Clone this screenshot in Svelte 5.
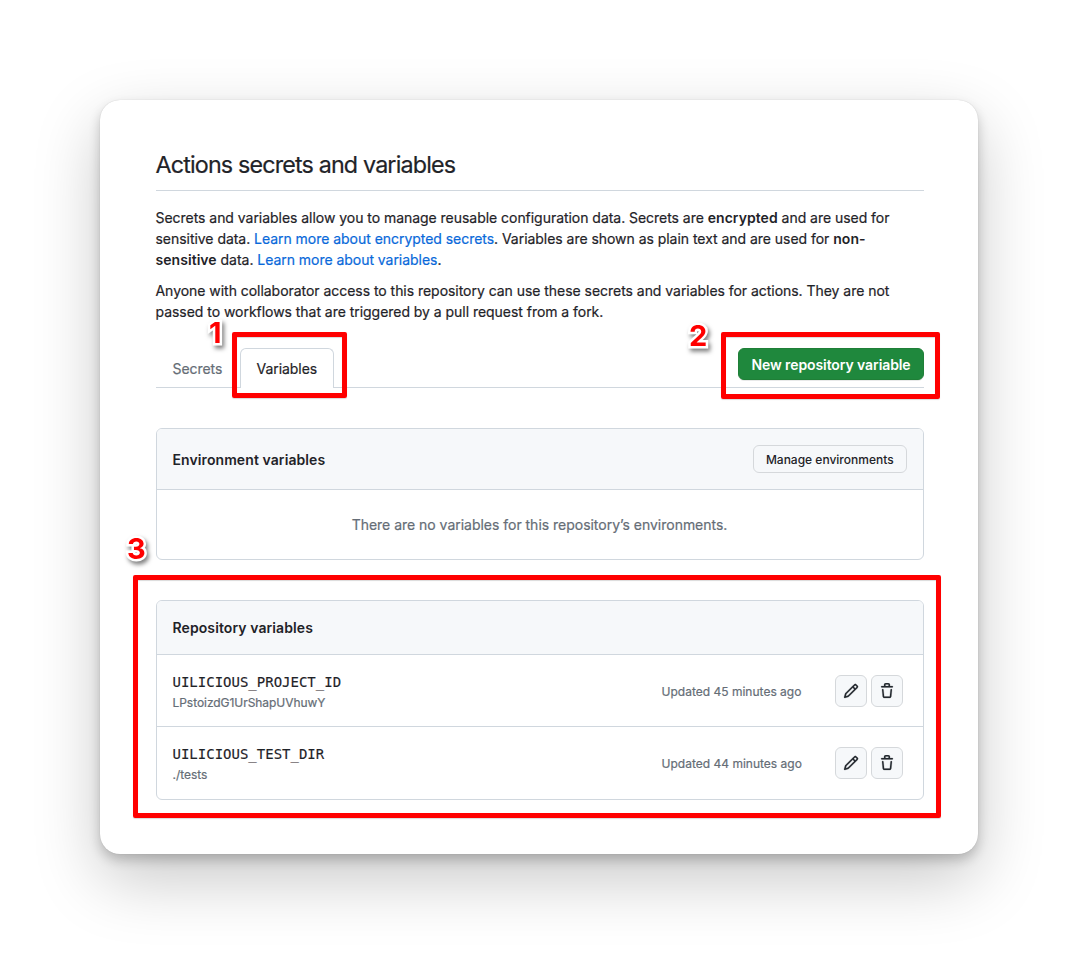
<script>
  const variables = [
    { name: 'UILICIOUS_PROJECT_ID', value: 'LPstoizdG1UrShapUVhuwY', updated: 'Updated 45 minutes ago' },
    { name: 'UILICIOUS_TEST_DIR', value: './tests', updated: 'Updated 44 minutes ago' }
  ];
</script>

<main class="stage">
  <section class="card">
    <h2>Actions secrets and variables</h2>

    <p class="intro">
      <span>Secrets and variables allow you to manage reusable configuration data. Secrets are <strong>encrypted</strong> and are used for</span><br />
      <span>sensitive data. <a href="#secrets">Learn more about encrypted secrets</a>. Variables are shown as plain text and are used for <strong>non-</strong></span><br />
      <span><strong>sensitive</strong> data. <a href="#variables">Learn more about variables</a>.</span>
    </p>
    <p class="intro second">
      <span>Anyone with collaborator access to this repository can use these secrets and variables for actions. They are not</span><br />
      <span>passed to workflows that are triggered by a pull request from a fork.</span>
    </p>

    <div class="tabbar">
      <nav>
        <button class="tab"><span>Secrets</span></button>
        <button class="tab active"><span>Variables</span></button>
      </nav>
      <button class="primary"><span>New repository variable</span></button>
    </div>

    <div class="box env">
      <header>
        <h3>Environment variables</h3>
        <button class="manage"><span>Manage environments</span></button>
      </header>
      <div class="blank"><span>There are no variables for this repository’s environments.</span></div>
    </div>

    <div class="box repo">
      <header><h3>Repository variables</h3></header>
      {#each variables as v}
        <div class="row">
          <div class="info">
            <code>{v.name}</code>
            <small>{v.value}</small>
          </div>
          <span class="updated">{v.updated}</span>
          <button class="icon" aria-label="Edit">
            <svg viewBox="0 0 16 16" width="16" height="16"><path d="M11.013 1.427a1.75 1.75 0 0 1 2.474 0l1.086 1.086a1.75 1.75 0 0 1 0 2.474l-8.61 8.61c-.21.21-.47.364-.756.445l-3.251.93a.75.75 0 0 1-.927-.928l.929-3.25c.081-.286.235-.547.445-.758l8.61-8.61Zm.176 4.823L9.75 4.81l-6.286 6.287a.253.253 0 0 0-.064.108l-.558 1.953 1.953-.558a.253.253 0 0 0 .108-.064Zm1.238-3.763a.25.25 0 0 0-.354 0L10.811 3.75l1.439 1.44 1.263-1.263a.25.25 0 0 0 0-.354Z" /></svg>
          </button>
          <button class="icon" aria-label="Delete">
            <svg viewBox="0 0 16 16" width="16" height="16"><path d="M11 1.75V3h2.25a.75.75 0 0 1 0 1.5H2.75a.75.75 0 0 1 0-1.5H5V1.75C5 .784 5.784 0 6.75 0h2.5C10.216 0 11 .784 11 1.75ZM4.496 6.675l.66 6.6a.25.25 0 0 0 .249.225h5.19a.25.25 0 0 0 .249-.225l.66-6.6a.75.75 0 0 1 1.492.149l-.66 6.6A1.748 1.748 0 0 1 10.595 15h-5.19a1.75 1.75 0 0 1-1.741-1.575l-.66-6.6a.75.75 0 1 1 1.492-.15ZM6.5 1.75V3h3V1.75a.25.25 0 0 0-.25-.25h-2.5a.25.25 0 0 0-.25.25Z" /></svg>
          </button>
        </div>
      {/each}
    </div>
  </section>

  <div class="mark m1"></div>
  <div class="mark m2"></div>
  <div class="mark m3"></div>
  <b class="num n1">1</b>
  <b class="num n2">2</b>
  <b class="num n3">3</b>
</main>

<style>
  :global(body) { margin: 0; background: #fff; }
  * { box-sizing: border-box; }
  .stage {
    position: relative;
    width: 1078px;
    height: 954px;
    padding: 100px;
    overflow: hidden;
    background: #fff;
    color: #1f2328;
    font: 400 14px/21px Inter, "Liberation Sans", sans-serif;
    white-space: nowrap;
  }
  .card {
    height: 754px;
    padding: 47px 54px 0 56px;
    border-radius: 20px;
    background: #fff;
    box-shadow: 0 0 1px rgba(0, 0, 0, 0.2), 0 6px 12px rgba(0, 0, 0, 0.2), 0 25px 66px rgba(0, 0, 0, 0.22);
  }
  h2 {
    height: 44px;
    margin: 0 0 16px;
    border-bottom: 1px solid #d0d7de;
    font-size: 23.3px;
    font-weight: 400;
    line-height: 36px;
    letter-spacing: -0.84px;
    text-indent: -0.5px;
    -webkit-text-stroke: 0.2px currentColor;
  }
  p { margin: 0 0 10px; }
  .intro { margin-left: -0.5px; letter-spacing: -0.038px; }
  .intro, .tab, .blank, small, .updated { -webkit-text-stroke: 0.2px currentColor; }
  .second { margin-bottom: 26px; }
  strong { font-weight: 600; letter-spacing: 0.05px; -webkit-text-stroke: 0; }
  a { color: #0969da; text-decoration: none; }
  button { margin: 0; font-family: inherit; color: inherit; }

  .tabbar {
    display: flex;
    justify-content: space-between;
    height: 40px;
    margin-bottom: 40px;
    border-bottom: 1px solid #d0d7de;
  }
  nav { display: flex; }
  .tab {
    width: 84px;
    height: 40px;
    padding: 0 0 0 15.5px;
    border: 1px solid transparent;
    border-bottom: 0;
    background: none;
    color: #656d76;
    font-size: 14px;
    font-weight: 400;
    line-height: 21px;
    letter-spacing: -0.05px;
    text-align: left;
  }
  .tab.active {
    width: 94px;
    border-color: #d0d7de;
    border-radius: 6px 6px 0 0;
    background: #fff;
    color: #1f2328;
  }
  .primary {
    width: 186px;
    height: 32px;
    padding: 0;
    border: 1px solid #1f7f37;
    border-radius: 6px;
    background: #1f883d;
    box-shadow: 0 1px 0 rgba(31, 35, 40, 0.1);
    color: #fff;
    font-size: 14px;
    font-weight: 600;
    letter-spacing: -0.09px;
  }
  .box { border: 1px solid #d0d7de; border-radius: 6px; overflow: hidden; }
  .box header {
    display: flex;
    align-items: center;
    justify-content: space-between;
    padding: 0 16px 0 15.5px;
    border-bottom: 1px solid #d0d7de;
    background: #f6f8fa;
  }
  .env { height: 132px; margin-bottom: 40px; }
  .env header { height: 61px; }
  .repo { height: 200px; }
  .repo header { height: 54px; }
  h3 { margin: 0; font-size: 14px; font-weight: 600; line-height: 21px; letter-spacing: 0.09px; }
  .manage {
    width: 154px;
    height: 28px;
    padding: 0 0.5px 0 0;
    border: 1px solid #d5d8db;
    border-radius: 6px;
    background: #f6f8fa;
    font-size: 12px;
    font-weight: 500;
  }
  .blank {
    display: grid;
    place-items: center;
    height: 70px;
    padding: 0 1px 2px 0;
    color: #656d76;
    letter-spacing: -0.02px;
  }
  .row {
    display: flex;
    align-items: center;
    height: 72px;
    padding: 0 20px 0 15.5px;
    border-bottom: 1px solid #d0d7de;
  }
  .row:last-child { border-bottom: 0; }
  .info { display: flex; flex: 1; flex-direction: column; padding-top: 3px; }
  code { font: 14px/21px "DejaVu Sans Mono", monospace; -webkit-text-stroke: 0.15px #1f2328; }
  small { font-size: 12px; line-height: 20px; color: #656d76; letter-spacing: -0.05px; }
  .updated { width: 173.5px; padding-top: 1px; font-size: 12px; color: #656d76; letter-spacing: 0.01px; }
  .icon {
    display: grid;
    place-items: center;
    width: 32px;
    height: 32px;
    padding: 0;
    border: 1px solid #d5d8db;
    border-radius: 6px;
    background: #f6f8fa;
  }
  .icon + .icon { margin-left: 4px; }
  .icon svg { fill: #24292f; stroke: #24292f; stroke-width: 0.2; }

  .mark {
    position: absolute;
    border: 5px solid #f00;
    border-radius: 2px;
    box-shadow: 0 1px 1px rgba(0, 0, 0, 0.15), inset 0 1px 1px rgba(0, 0, 0, 0.15);
  }
  .m1 { left: 232px; top: 332px; width: 115px; height: 66px; }
  .m2 { left: 721px; top: 332px; width: 219px; height: 67px; }
  .m3 { left: 133px; top: 575px; width: 808px; height: 243px; }
  .num {
    position: absolute;
    color: #f00;
    font-size: 29px;
    font-weight: 700;
    line-height: 36px;
    -webkit-text-stroke: 5px #fff;
    paint-order: stroke fill;
    filter: drop-shadow(2px 3px 2px rgba(0, 0, 0, 0.5));
  }
  .n1 { left: 209px; top: 315px; }
  .n2 { left: 689px; top: 318px; }
  .n3 { left: 127px; top: 531px; }
</style>
